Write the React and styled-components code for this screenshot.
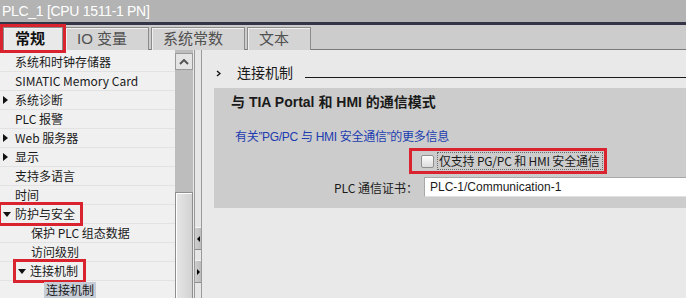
import React from "react";
import styled, { createGlobalStyle, css } from "styled-components";

const FONT = `"Liberation Sans", "Noto Sans CJK SC", sans-serif`;
const NARROW = `"Noto Sans CJK SC", "Liberation Sans", sans-serif`;
const RED = "#d9232e";

const Global = createGlobalStyle`
  html, body { margin: 0; padding: 0; background: #e9e9e9; }
  body { font-family: ${FONT}; }
  * { box-sizing: border-box; }
`;

const Window = styled.div`
  width: 686px;
  height: 298px;
  overflow: hidden;
  display: flex;
  flex-direction: column;
  background: #e9e9e9;
`;

const TitleBar = styled.div`
  height: 25px;
  flex: none;
  background: #b3b3b3;
  border-bottom: 3px solid #353548;
  color: #ffffff;
  font-size: 14px;
  letter-spacing: -0.3px;
  line-height: 22px;
  padding-left: 2px;
`;

const TabBar = styled.div`
  height: 25px;
  flex: none;
  background: #cccccc;
  border-bottom: 1px solid #7a7a7a;
  display: flex;
  align-items: flex-end;
  padding-left: 3px;
  gap: 2px;
`;

const Tab = styled.div`
  height: 23px;
  margin-bottom: -1px;
  padding: 0 ${(p) => p.$extra ?? 21}px 0 11px;
  font-size: 15px;
  line-height: 21px;
  border: 1px solid #8c8c8c;
  border-bottom: none;
  box-shadow: inset 1px 1px 0 #f0f0f0;
  background: #d4d4d4;
  color: #505050;
  ${(p) =>
    p.$active &&
    css`
      background: #e9e9e9;
      color: #111;
      font-weight: bold;
      outline: 3px solid ${RED};
      outline-offset: 0px;
      position: relative;
      z-index: 1;
    `}
`;

const Body = styled.div`
  flex: 1;
  display: flex;
  min-height: 0;
`;

const Tree = styled.div`
  width: 175px;
  flex: none;
  background: #f0f0f0;
  padding-top: 3px;
  overflow: hidden;
`;

const Row = styled.div`
  height: 19px;
  display: flex;
  align-items: center;
  border-bottom: 1px solid #e2e2e2;
  padding-left: ${(p) => (p.$level - 1) * 15}px;
  font-family: ${NARROW};
  font-size: 12px;
  color: #1a1a1a;
  white-space: nowrap;
`;

const Marked = styled.span`
  display: inline-flex;
  align-items: center;
  height: 20px;
  ${(p) =>
    p.$marked &&
    css`
      outline: 3px solid ${RED};
      outline-offset: -1px;
      padding-right: 4px;
    `}
`;

const Expander = styled.span`
  width: 15px;
  flex: none;
  display: inline-flex;
  align-items: center;
  padding-left: 3px;
`;

const Label = styled.span`
  padding: 0 2px;
  margin-left: ${(p) => (p.$indent ? 14 : -2)}px;
  line-height: 16px;
  background: ${(p) => (p.$selected ? "#c6cdd7" : "transparent")};
`;

const Scrollbar = styled.div`
  width: 18px;
  flex: none;
  background: #bdbdbd;
  padding-top: 3px;
  display: flex;
  flex-direction: column;
`;

const ScrollButton = styled.div`
  height: 17px;
  background: #e4e4e4;
  border: 1px solid #9a9a9a;
  display: flex;
  align-items: center;
  justify-content: center;
`;

const ScrollTrack = styled.div`
  height: 122px;
`;

const ScrollThumb = styled.div`
  flex: 1;
  border: 1px solid #8e8e8e;
  border-bottom: none;
  box-shadow: inset 1px 1px 0 #ffffff;
  background: linear-gradient(to right, #e6e6e6, #d2d2d2);
`;

const Splitter = styled.div`
  width: 8px;
  flex: none;
  margin-left: 1px;
  background: #e6e6e6;
  border-left: 1px solid #9a9a9a;
  border-right: 1px solid #9a9a9a;
  padding-top: 177px;
  display: flex;
  flex-direction: column;
  gap: 10px;
`;

const SplitButton = styled.div`
  height: 23px;
  background: linear-gradient(to right, #cfcfcf, #bcbcbc);
  border-top: 1px solid #f4f4f4;
  border-bottom: 1px solid #8f8f8f;
  display: flex;
  align-items: center;
  justify-content: center;
`;

const Panel = styled.div`
  flex: 1;
  min-width: 0;
  background: #e9e9e9;
  padding-left: 12px;
  display: flex;
  flex-direction: column;
`;

const Breadcrumb = styled.div`
  height: 38px;
  flex: none;
  display: flex;
  align-items: flex-start;
  padding: 15px 0 0 2px;
  font-size: 14px;
  line-height: 16px;
  color: #1a1a1a;
`;

const Chevron = styled.span`
  width: 21px;
  height: 16px;
  flex: none;
  display: inline-flex;
  align-items: center;
`;

const Rule = styled.span`
  flex: 1;
  height: 13px;
  margin-left: 12px;
  border-bottom: 1px solid #1a1a1a;
`;

const Section = styled.div`
  background: #cccccc;
  padding: 0 0 11px 17px;
  display: flex;
  flex-direction: column;
`;

const SectionTitle = styled.div`
  height: 28px;
  line-height: 28px;
  font-size: 14px;
  font-weight: bold;
  color: #1a1a1a;
`;

const Link = styled.a`
  margin-top: 13px;
  margin-left: 4px;
  font-size: 12px;
  letter-spacing: -0.3px;
  line-height: 16px;
  color: #1c3cb0;
  text-decoration: none;
`;

const CheckRow = styled.div`
  margin: 6px 0 0 181px;
  align-self: flex-start;
  height: 20px;
  display: flex;
  align-items: center;
  padding-left: 9px;
  padding-right: 1px;
  outline: 3px solid ${RED};
`;

const CheckBox = styled.span`
  width: 13px;
  height: 13px;
  border: 1px solid #8f8f8f;
  border-radius: 2px;
  background: linear-gradient(#fdfdfd, #dcdcdc);
  flex: none;
`;

const CheckLabel = styled.span`
  margin-left: 3px;
  padding: 0 2px 0 1px;
  height: 18px;
  line-height: 16px;
  font-family: ${NARROW};
  font-size: 12px;
  letter-spacing: -0.2px;
  color: #1a1a1a;
  border: 1px dotted #6a6a6a;
`;

const FieldRow = styled.div`
  margin-top: 6px;
  padding-left: 103px;
  display: flex;
  align-items: center;
  height: 20px;
`;

const FieldLabel = styled.span`
  width: 90px;
  flex: none;
  font-family: ${NARROW};
  font-size: 12px;
  color: #1a1a1a;
`;

const Input = styled.div`
  flex: 1;
  height: 20px;
  background: #ffffff;
  border-top: 1px solid #a8a8a8;
  border-left: 1px solid #a8a8a8;
  border-bottom: 1px solid #e0e0e0;
  padding-left: 5px;
  font-size: 12px;
  line-height: 18px;
  color: #1a1a1a;
`;

const TriRight = () => (
  <svg width="5" height="8" viewBox="0 0 5 8">
    <path d="M0 0 L5 4 L0 8 Z" fill="#111" />
  </svg>
);

const TriDown = () => (
  <svg width="8" height="5" viewBox="0 0 8 5">
    <path d="M0 0 L8 0 L4 5 Z" fill="#111" />
  </svg>
);

const rows = [
  { label: "系统和时钟存储器", level: 1 },
  { label: "SIMATIC Memory Card", level: 1 },
  { label: "系统诊断", level: 1, exp: "right" },
  { label: "PLC 报警", level: 1 },
  { label: "Web 服务器", level: 1, exp: "right" },
  { label: "显示", level: 1, exp: "right" },
  { label: "支持多语言", level: 1 },
  { label: "时间", level: 1 },
  { label: "防护与安全", level: 1, exp: "down", marked: true },
  { label: "保护 PLC 组态数据", level: 2, indent: true },
  { label: "访问级别", level: 2, indent: true },
  { label: "连接机制", level: 2, exp: "down", marked: true },
  { label: "连接机制", level: 3, indent: true, selected: true },
];

export default function App() {
  return (
    <Window>
      <Global />
      <TitleBar>PLC_1 [CPU 1511-1 PN]</TitleBar>
      <TabBar>
        <Tab $active $extra={17}>常规</Tab>
        <Tab>IO 变量</Tab>
        <Tab>系统常数</Tab>
        <Tab>文本</Tab>
      </TabBar>
      <Body>
        <Tree>
          {rows.map((r, i) => (
            <Row key={i} $level={r.level}>
              {r.indent ? (
                <Label $indent $selected={r.selected}>
                  {r.label}
                </Label>
              ) : (
                <Marked $marked={r.marked}>
                  <Expander>
                    {r.exp === "right" && <TriRight />}
                    {r.exp === "down" && <TriDown />}
                  </Expander>
                  <Label>{r.label}</Label>
                </Marked>
              )}
            </Row>
          ))}
        </Tree>
        <Scrollbar>
          <ScrollButton>
            <svg width="10" height="6" viewBox="0 0 10 6">
              <path d="M1 5 L5 1 L9 5" stroke="#555" strokeWidth="2" fill="none" />
            </svg>
          </ScrollButton>
          <ScrollTrack />
          <ScrollThumb />
        </Scrollbar>
        <Splitter>
          <SplitButton>
            <svg width="3" height="6" viewBox="0 0 3 6">
              <path d="M3 0 L0 3 L3 6 Z" fill="#000" />
            </svg>
          </SplitButton>
          <SplitButton>
            <svg width="3" height="6" viewBox="0 0 3 6">
              <path d="M0 0 L3 3 L0 6 Z" fill="#000" />
            </svg>
          </SplitButton>
        </Splitter>
        <Panel>
          <Breadcrumb>
            <Chevron>
              <svg width="5" height="7" viewBox="0 0 5 7">
                <path d="M1 1 L4 3.5 L1 6" stroke="#111" strokeWidth="1.4" fill="none" />
              </svg>
            </Chevron>
            连接机制
            <Rule />
          </Breadcrumb>
          <Section>
            <SectionTitle>与 TIA Portal 和 HMI 的通信模式</SectionTitle>
            <Link href="#">有关”PG/PC 与 HMI 安全通信”的更多信息</Link>
            <CheckRow>
              <CheckBox />
              <CheckLabel>仅支持 PG/PC 和 HMI 安全通信</CheckLabel>
            </CheckRow>
            <FieldRow>
              <FieldLabel>PLC 通信证书：</FieldLabel>
              <Input>PLC-1/Communication-1</Input>
            </FieldRow>
          </Section>
        </Panel>
      </Body>
    </Window>
  );
}
